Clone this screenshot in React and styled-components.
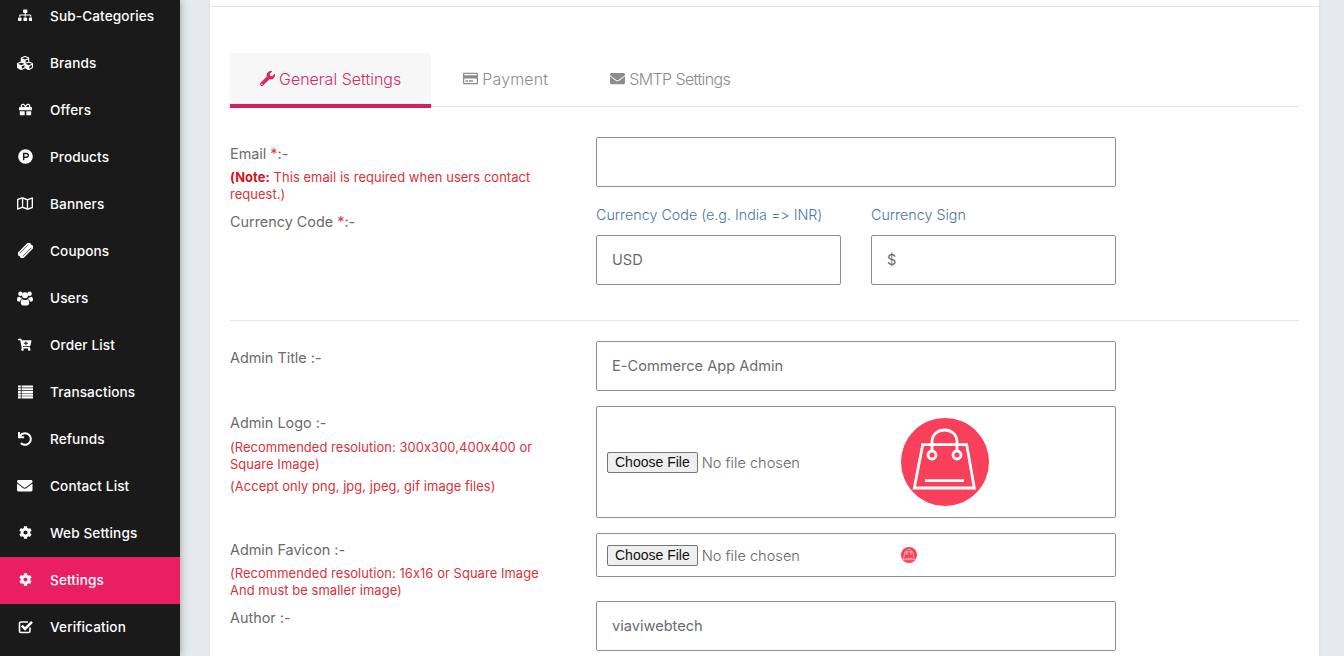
import React from "react";
import styled, { createGlobalStyle } from "styled-components";
import {
  FaSitemap, FaCubes, FaGift, FaProductHunt, FaRegMap, FaCartPlus,
  FaUndo, FaEnvelope, FaCog, FaWrench, FaRegCreditCard,
} from "react-icons/fa";

const Global = createGlobalStyle`
  html, body { margin: 0; padding: 0; height: 656px; overflow: hidden; background: #e5eaed; }
  body { font-family: Inter, "Open Sans", sans-serif; font-feature-settings: "calt" 0, "liga" 0; }
  * { box-sizing: border-box; }
`;

const Page = styled.div`display: flex; height: 656px; overflow: hidden; background: #e5eaed;`;
const Sidebar = styled.nav`
  width: 180px; flex: none; background: #1a1a1a; box-shadow: 0 0 8px rgba(0,0,0,.35);
  overflow: hidden; height: 656px;
`;
const Menu = styled.ul`list-style: none; margin: -7px 0 0; padding: 0;`;
const Item = styled.li`
  height: 47px; display: flex; align-items: center; padding: 0 0 2px 17px; color: #fff;
  font-size: 13.6px; font-weight: 500; letter-spacing: 0.12px;
  background: ${(p) => (p.$active ? "#e91e63" : "transparent")};
`;
const ItemIcon = styled.span`
  width: 16px; margin-right: 17px; display: flex; justify-content: center; flex: none;
  font-size: ${(p) => p.$size || 15}px;
`;
const Main = styled.main`flex: 1; padding: 0 25px 0 30px; min-width: 0;`;
const Card = styled.section`background: #fff; height: 700px; box-shadow: 0 0 4px rgba(0,0,0,.08);`;
const CardHead = styled.div`height: 7px; border-bottom: 1px solid #e4e4e4;`;
const CardBody = styled.div`padding: 46px 20px 0;`;
const Tabs = styled.div`display: flex; height: 54px; border-bottom: 1px solid #e2e2e2;`;
const Tab = styled.div`
  height: 55px; display: flex; align-items: center; gap: 4px; padding: 0 ${(p) => p.$pad || 30}px 4px;
  font-size: 16px; font-weight: 300; letter-spacing: ${(p) => p.$ls || 0}px;
  color: ${(p) => (p.$active ? "#d62b5e" : "#8c8c8c")};
  background: ${(p) => (p.$active ? "#f7f7f7" : "transparent")};
  box-shadow: ${(p) => (p.$active ? "inset 0 -4px 0 #d81f5e" : "none")};
  svg { font-size: 15px; flex: none; }
`;
const Row = styled.div`
  display: grid; grid-template-columns: 366px 520px; height: ${(p) => p.$h}px; margin-top: ${(p) => p.$mt || 0}px;
`;
const Label = styled.div`
  font-size: 14.4px; color: #6b6b6b; font-weight: 400; line-height: 20px; padding-top: ${(p) => p.$pt || 0}px;
`;
const Star = styled.span`color: #e8353a;`;
const Note = styled.div`
  width: 320px; font-size: 12.9px; line-height: 17px; color: #d9323a; font-weight: 400; letter-spacing: 0.08px;
  margin-top: ${(p) => p.$mt ?? 5}px;
  b { font-weight: 700; color: #d3141c; }
`;
const Input = styled.input`
  display: block; width: 100%; height: 50px; border: 1px solid #8f8f8f; border-radius: 2px;
  padding: 0 15px; font: 400 14.6px Inter, sans-serif; font-feature-settings: "calt" 0; color: #6b6b6b; background: #fff; outline: none;
`;
const Split = styled.div`display: grid; grid-template-columns: 245px 245px; gap: 30px;`;
const FieldTitle = styled.div`
  font-size: 14.3px; color: #4a77a6; font-weight: 300; line-height: 20px; height: 30px;
`;
const Divider = styled.hr`border: 0; border-top: 1px solid #e8e8e8; margin: 0;`;
const FileBox = styled.div`
  height: ${(p) => p.$h}px; border: 1px solid #8f8f8f; border-radius: 2px; display: flex; align-items: center;
  padding-left: 10px;
`;
const FileInput = styled.input`
  width: 294px; flex: none; font: 300 14.6px Inter, sans-serif; color: #666;
  &::file-selector-button {
    font: 400 14px "Liberation Sans", sans-serif; color: #111; height: 21px; padding: 0 7px; margin-right: 4px;
    background: #efefef; border: 1px solid #767676; border-radius: 2px;
  }
`;
const Glyph = styled.svg`width: 1em; height: 1em; display: block; fill: currentColor;`;

const Bag = ({ size }) => (
  <svg width={size} height={size} viewBox="0 0 88 88" aria-hidden="true">
    <circle cx="44" cy="44" r="44" fill="#f8405a" />
    <g fill="none" stroke="#fff" strokeWidth="2.8">
      <path d="M21.7 26.7H65.7L73.3 70H13.3Z" />
      <path d="M31 33V24C31 8 56 8 56 24V33" />
      <circle cx="31" cy="37" r="4" />
      <circle cx="56" cy="37" r="4" />
      <path d="M24 62.7H63" />
    </g>
  </svg>
);

const TicketIcon = () => (
  <Glyph viewBox="0 0 16 16">
    <g transform="rotate(-45 8 8)">
      <path fillRule="evenodd" d="M-1.5 3.8H17.5V6.2C16.4 6.4 16.4 9.6 17.5 9.8V12.2H-1.5V9.8C-.4 9.6-.4 6.4-1.5 6.2ZM1.5 5.4V5.9H14.5V5.4ZM1.5 10.1V10.6H14.5V10.1Z" />
    </g>
  </Glyph>
);
const UsersIcon = () => (
  <Glyph viewBox="0 0 16 15">
    <circle cx="3.4" cy="3.2" r="2.2" />
    <circle cx="12.6" cy="3.2" r="2.2" />
    <circle cx="8" cy="4.8" r="3" />
    <path d="M0 9.6C0 7 1 6 2.4 6.4 3 6.9 3.6 7 4.2 7 4.4 7.8 4.9 8.3 5 8.6 3.8 9 3.2 10 3 11.2 1.2 11.2 0 10.8 0 9.6Z" />
    <path d="M16 9.6C16 7 15 6 13.6 6.4 13 6.9 12.4 7 11.8 7 11.6 7.8 11.1 8.3 11 8.6 12.2 9 12.8 10 13 11.2 14.8 11.2 16 10.8 16 9.6Z" />
    <path d="M3.8 12.6C3.8 10.4 4.6 8.7 5.8 8.7 6.4 9.2 7.1 9.6 8 9.6 8.9 9.6 9.6 9.2 10.2 8.7 11.4 8.7 12.2 10.4 12.2 12.6 12.2 14 11.2 15 10 15H6C4.8 15 3.8 14 3.8 12.6Z" />
  </Glyph>
);
const ListIcon = () => (
  <Glyph viewBox="0 0 15 15">
    {[1.5, 4.2, 6.9, 9.6, 12.3].map((y) => (
      <path key={y} d={`M0 ${y}h2.8v2.1H0ZM3.6 ${y}H15v2.1H3.6Z`} />
    ))}
  </Glyph>
);
const CheckIcon = () => (
  <Glyph viewBox="0 0 15 15">
    <path fill="none" stroke="currentColor" strokeWidth="1.6" d="M12 8.5V12a1.5 1.5 0 0 1-1.5 1.5H3A1.5 1.5 0 0 1 1.5 12V4.5A1.5 1.5 0 0 1 3 3h7" />
    <path fill="none" stroke="currentColor" strokeWidth="2.6" d="M3.8 6.6 7 9.8 14 2.8" />
  </Glyph>
);

const items = [
  ["Sub-Categories", FaSitemap, 14.5], ["Brands", FaCubes, 18], ["Offers", FaGift, 13], ["Products", FaProductHunt, 15],
  ["Banners", FaRegMap, 17], ["Coupons", TicketIcon, 15], ["Users", UsersIcon, 16], ["Order List", FaCartPlus, 13.5],
  ["Transactions", ListIcon, 15], ["Refunds", FaUndo, 14], ["Contact List", FaEnvelope, 15.5], ["Web Settings", FaCog, 13],
  ["Settings", FaCog, 13], ["Verification", CheckIcon, 15],
];

export default function App() {
  return (
    <Page>
      <Global />
      <Sidebar>
        <Menu>
          {items.map(([name, Icon, size]) => (
            <Item key={name} $active={name === "Settings"}>
              <ItemIcon $size={size}><Icon /></ItemIcon>
              {name}
            </Item>
          ))}
        </Menu>
      </Sidebar>
      <Main>
        <Card>
          <CardHead />
          <CardBody>
            <Tabs>
              <Tab $active><FaWrench />General Settings</Tab>
              <Tab $pad={32} $ls={0.15}><FaRegCreditCard />Payment</Tab>
              <Tab $ls={-0.6}><FaEnvelope />SMTP Settings</Tab>
            </Tabs>
            <Row $h={68} $mt={30}>
              <Label $pt={7}>
                Email <Star>*</Star>:-
                <Note><b>(Note:</b> This email is required when users contact request.)</Note>
              </Label>
              <Input />
            </Row>
            <Row $h={115}>
              <Label $pt={7}>Currency Code <Star>*</Star>:-</Label>
              <Split>
                <div>
                  <FieldTitle>Currency Code (e.g. India =&gt; INR)</FieldTitle>
                  <Input defaultValue="USD" />
                </div>
                <div>
                  <FieldTitle>Currency Sign</FieldTitle>
                  <Input defaultValue="$" />
                </div>
              </Split>
            </Row>
            <Divider />
            <Row $h={65} $mt={20}>
              <Label $pt={7}>Admin Title :-</Label>
              <Input defaultValue="E-Commerce App Admin" />
            </Row>
            <Row $h={127}>
              <Label $pt={7}>
                Admin Logo :-
                <Note $mt={6}>(Recommended resolution: 300x300,400x400 or Square Image)</Note>
                <Note>(Accept only png, jpg, jpeg, gif image files)</Note>
              </Label>
              <FileBox $h={112}>
                <FileInput type="file" />
                <Bag size={88} />
              </FileBox>
            </Row>
            <Row $h={68}>
              <Label $pt={7}>
                Admin Favicon :-
                <Note>(Recommended resolution: 16x16 or Square Image<br />And must be smaller image)</Note>
              </Label>
              <FileBox $h={44}>
                <FileInput type="file" />
                <Bag size={16} />
              </FileBox>
            </Row>
            <Row $h={50}>
              <Label $pt={7}>Author :-</Label>
              <Input defaultValue="viaviwebtech" />
            </Row>
          </CardBody>
        </Card>
      </Main>
    </Page>
  );
}
